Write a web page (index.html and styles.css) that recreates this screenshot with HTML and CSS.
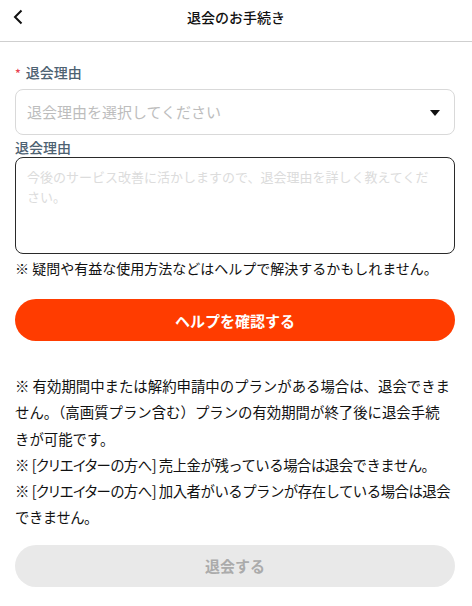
FILE: index.html
```html
<!DOCTYPE html>
<html lang="ja">
<head>
<meta charset="utf-8">
<title>退会のお手続き</title>
<link rel="stylesheet" href="styles.css">
</head>
<body>
<header class="topbar">
  <a class="back" aria-label="戻る">
    <svg width="12" height="16" viewBox="0 0 12 16"><path d="M9.5 1.5 L3 8 L9.5 14.5" fill="none" stroke="#111" stroke-width="2"/></svg>
  </a>
  <h1 class="title">退会のお手続き</h1>
</header>
<main class="content">
  <div class="label"><span class="req">*</span>退会理由</div>
  <div class="select">
    <span class="select-ph">退会理由を選択してください</span>
    <svg class="caret" width="10" height="6" viewBox="0 0 10 6"><path d="M0 0 H10 L5 6 Z" fill="#111"/></svg>
  </div>
  <div class="label label2">退会理由</div>
  <textarea class="reason" placeholder="今後のサービス改善に活かしますので、退会理由を詳しく教えてください。"></textarea>
  <p class="hint">※ 疑問や有益な使用方法などはヘルプで解決するかもしれません。</p>
  <button class="btn btn-primary">ヘルプを確認する</button>
  <div class="notes">
    <p class="note">※ 有効期間中または解約申請中のプランがある場合は、退会できま<br>せん。（高画質プラン含む）プランの有効期間が終了後に退会手続<br>きが可能です。</p>
    <p class="note note-tight">※ <span class="tag">[クリエイターの方へ]</span> 売上金が残っている場合は退会できません。</p>
    <p class="note note-tight">※ <span class="tag">[クリエイターの方へ]</span> 加入者がいるプランが存在している場合は退会<br>できません。</p>
  </div>
  <button class="btn btn-disabled" disabled>退会する</button>
</main>
</body>
</html>
```
FILE: styles.css
```css
* { box-sizing: border-box; }
html, body { margin: 0; padding: 0; background: #fff; }
body {
  font-family: "Noto Sans CJK JP", "Noto Sans", sans-serif;
  color: #222;
  width: 472px;
}
.topbar {
  height: 42px;
  border-bottom: 1px solid #cfcfcf;
  display: flex;
  align-items: center;
  justify-content: center;
  position: relative;
}
.back {
  position: absolute;
  left: 12px;
  top: 9px;
  display: flex;
}
.title {
  margin: 0;
  font-size: 14px;
  font-weight: 500;
  line-height: 20px;
  color: #111;
  transform: translateY(-4px);
}
.content {
  padding: 0 17px 0 15px;
  display: flex;
  flex-direction: column;
}
.label {
  margin-top: 20px;
  font-size: 14px;
  line-height: 20px;
  font-weight: 500;
  color: #4e6272;
}
.req {
  color: #e8424f;
  font-size: 12px;
  margin-right: 5px;
}
.select {
  margin-top: 6px;
  height: 46px;
  border: 1px solid #d9d9d9;
  border-radius: 8px;
  display: flex;
  align-items: center;
  justify-content: space-between;
  padding: 0 14px 0 11px;
}
.select-ph {
  font-size: 15px;
  color: #bdbdbd;
  line-height: 20px;
}
.caret { margin-top: 1px; }
.label2 { margin-top: 2px; }
.reason {
  display: block;
  width: 100%;
  height: 97px;
  border: 1px solid #2a2a2a;
  border-radius: 8px;
  padding: 9px 20px 9px 11px;
  font-family: inherit;
  font-size: 13px;
  line-height: 20px;
  resize: none;
  outline: none;
  color: #222;
}
.reason::placeholder { color: #dcdcdc; }
.hint {
  margin: 4px 0 0;
  font-size: 14px;
  line-height: 20px;
  color: #111;
}
.btn {
  display: flex;
  align-items: center;
  justify-content: center;
  width: 100%;
  height: 42px;
  border: none;
  border-radius: 21px;
  font-family: inherit;
  font-size: 15px;
  font-weight: 700;
  padding: 0;
}
.btn-primary {
  margin-top: 21px;
  background: #ff3c00;
  color: #fff;
}
.notes {
  margin-top: 32px;
}
.note {
  margin: 0;
  font-size: 14.4px;
  line-height: 26.3px;
  color: #111;
  white-space: nowrap;
}
.note-tight {
  letter-spacing: -0.5px;
}
.tag {
  font-feature-settings: "palt";
}
.btn-disabled {
  margin-top: 14px;
  background: #e9e9e9;
  color: #ababab;
}
```
